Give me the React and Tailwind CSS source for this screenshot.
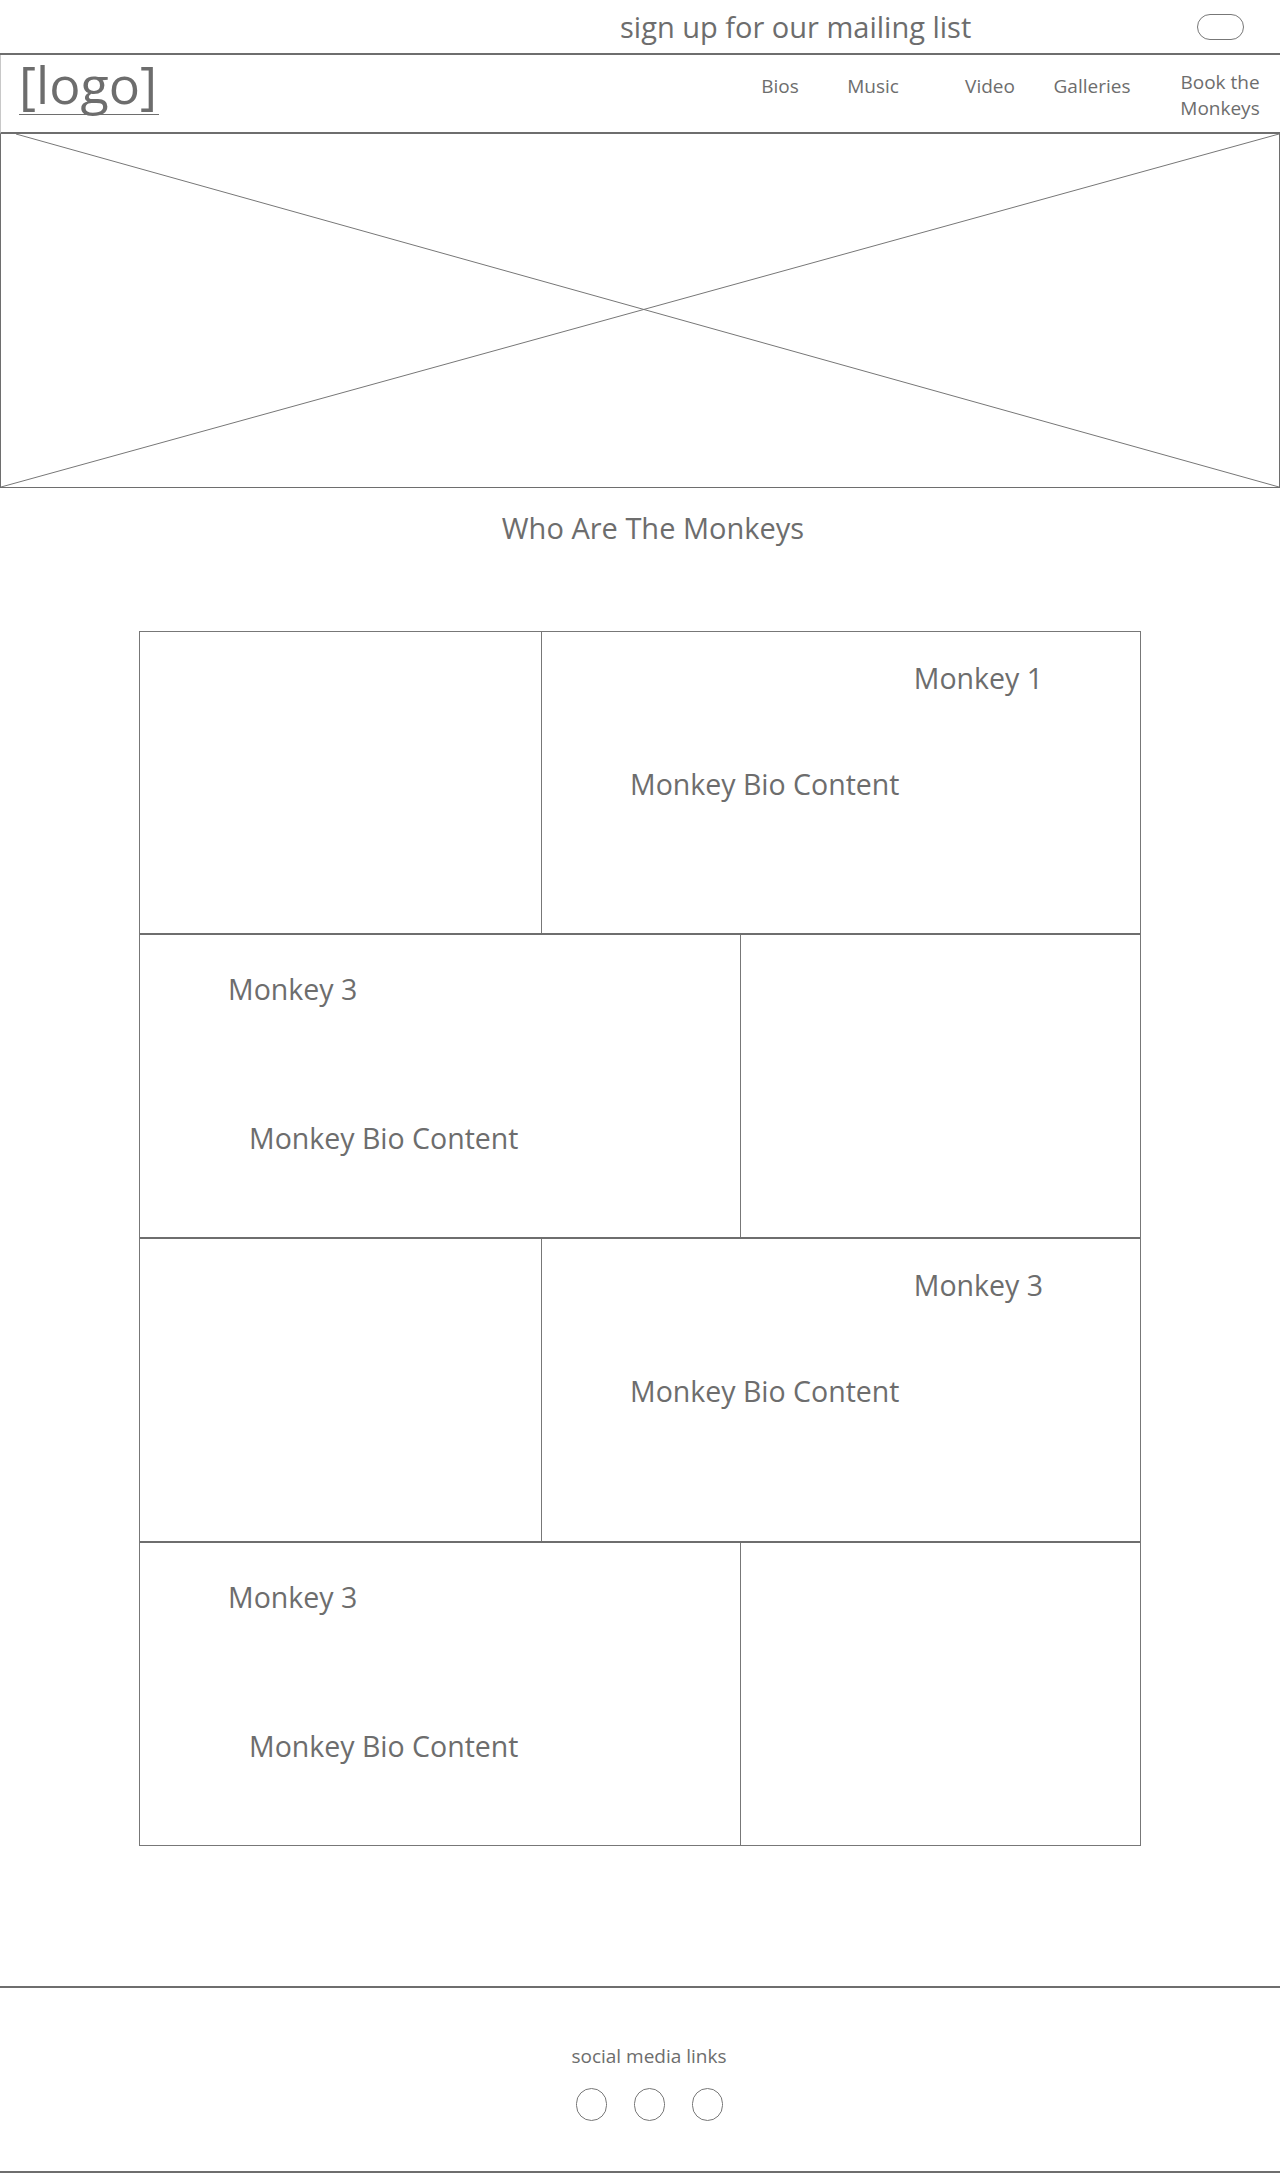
// App.jsx — "Monkeys" band site wireframe
// Header strip, nav, hero placeholder, bios grid and footer.

const FONT = { fontFamily: '"Open Sans", "Noto Sans", sans-serif' }

const NAV = [
  { label: 'Bios', cls: 'w-[90px]' },
  { label: 'Music', cls: 'w-[96px]' },
  { label: 'Video', cls: 'ml-[19px] w-[100px]' },
  { label: 'Galleries', cls: 'ml-[7px] w-[90px]' },
]

// side: which side the picture sits on
const BIOS = [
  { name: 'Monkey 1', side: 'left', h: 'h-[301px]' },
  { name: 'Monkey 3', side: 'right', h: 'h-[304px] border-t-2' },
  { name: 'Monkey 3', side: 'left', h: 'h-[304px] border-t-2' },
  { name: 'Monkey 3', side: 'right', h: 'h-[304px] border-t-2' },
]

function BioRow({ name, side, h }) {
  if (side === 'left') {
    return (
      <div className={`flex border-[#6e6e6e] ${h}`}>
        <div className="w-[402px] shrink-0 border-r border-[#777]" />
        <div className="flex flex-1 flex-col pt-[28px]">
          <div className="self-end mr-[97px] text-[28.5px] leading-[36px]">{name}</div>
          <div className="ml-[88px] mt-[70px] text-[28.5px] leading-[36px]">Monkey Bio Content</div>
        </div>
      </div>
    )
  }
  return (
    <div className={`flex border-[#6e6e6e] ${h}`}>
      <div className="flex w-[600px] shrink-0 flex-col pt-[36px]">
        <div className="ml-[88px] text-[28.5px] leading-[36px]">{name}</div>
        <div className="ml-[109px] mt-[113px] text-[28.5px] leading-[36px]">Monkey Bio Content</div>
      </div>
      <div className="flex-1 border-l border-[#777]" />
    </div>
  )
}

export default function App() {
  return (
    <div className="w-[1280px] h-[2175px] bg-white text-[#6d6d6d]" style={FONT}>
      {/* ── Mailing list strip ───────────────────────── */}
      <div className="flex h-[55px] items-center border-b-2 border-[#6e6e6e]">
        <span className="ml-[620px] text-[29px] leading-[36px]">sign up for our mailing list</span>
        <button className="ml-auto mr-[36px] h-[26px] w-[47px] rounded-full border border-[#777]" />
      </div>

      {/* ── Nav ──────────────────────────────────────── */}
      <header className="flex h-[79px] border-b-2 border-l border-b-[#6e6e6e] border-l-[#c8c8c8]">
        <a className="ml-[18px] mt-[2px] block h-[58px] self-start border-b border-[#6e6e6e] pr-[2px] text-[52px] leading-[54px]">
          [logo]
        </a>
        <nav className="ml-auto mr-[15px] flex items-start pt-[18px] text-[19px] leading-[26px]">
          {NAV.map(item => (
            <span key={item.label} className={`text-center ${item.cls}`}>{item.label}</span>
          ))}
          <span className="ml-[38px] -mt-[4px] w-[90px] text-center">Book the<br />Monkeys</span>
        </nav>
      </header>

      {/* ── Hero placeholder ─────────────────────────── */}
      <div className="h-[354px] border-x border-b border-[#6e6e6e]">
        <svg className="block h-full w-full" viewBox="0 0 1278 353" preserveAspectRatio="none">
          <line x1="15" y1="0" x2="1278" y2="353" stroke="#777" strokeWidth="1" />
          <line x1="0" y1="353" x2="1278" y2="0" stroke="#777" strokeWidth="1" />
        </svg>
      </div>

      <h2 className="mt-[22px] pl-[26px] text-center text-[29px] font-normal leading-[36px]">Who Are The Monkeys</h2>

      {/* ── Bios grid ────────────────────────────────── */}
      <div className="ml-[139px] mt-[85px] w-[1002px] border border-[#777]">
        {BIOS.map((b, i) => (
          <BioRow key={i} {...b} />
        ))}
      </div>

      {/* ── Footer ───────────────────────────────────── */}
      <footer className="mt-[140px] flex h-[187px] flex-col items-center border-y-2 border-[#6e6e6e] pl-[18px] pt-[55px]">
        <div className="text-[19px] leading-[26px]">social media links</div>
        <div className="mt-[19px] flex gap-[27px]">
          <span className="h-[33px] w-[31px] rounded-full border border-[#777]" />
          <span className="h-[33px] w-[31px] rounded-full border border-[#777]" />
          <span className="h-[33px] w-[31px] rounded-full border border-[#777]" />
        </div>
      </footer>
    </div>
  )
}
